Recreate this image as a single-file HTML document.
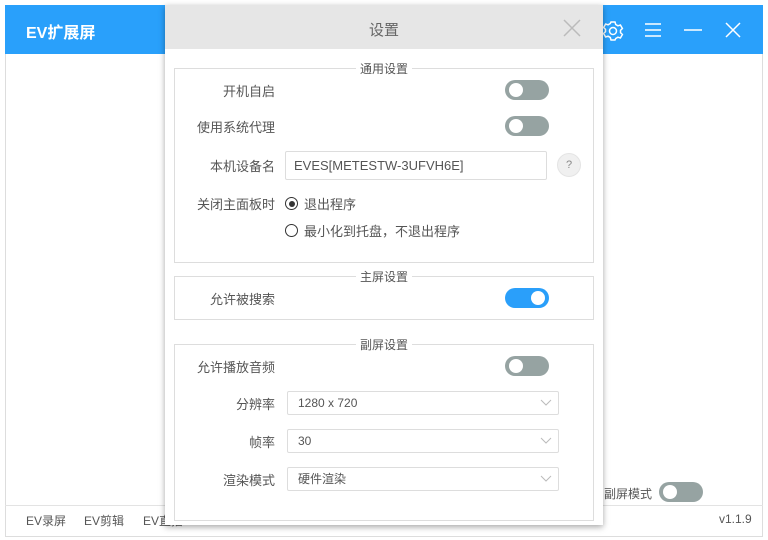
<!DOCTYPE html><html><head><meta charset="utf-8"><style>
*{margin:0;padding:0;box-sizing:border-box}
body{width:768px;height:540px;background:#fff;font-family:"Liberation Sans","Noto Sans CJK SC",sans-serif;font-size:13px;color:#555;position:relative;overflow:hidden}
.a{position:absolute}
.win{left:5px;top:5px;width:758px;height:532px;border:1px solid #ddd;background:#fff}
.hdr{left:5px;top:5px;width:758px;height:49px;background:#29a0fb}
.tg{position:absolute;width:44px;height:20px;border-radius:10px;background:#96a3a2}
.tg::after{content:"";position:absolute;left:4px;top:3px;width:14px;height:14px;border-radius:7px;background:#fff}
.tg.on{background:#2a9ffa}.tg.on::after{left:26px}
.box{position:absolute;left:174px;width:420px;border:1px solid #ddd}
.lg{position:absolute;left:0;width:100%;text-align:center;top:-9px;font-size:12px}
.lg span{background:#fff;padding:0 4px}
.lb{position:absolute;text-align:right;width:110px;left:165px}
.sel{position:absolute;left:287px;width:272px;height:24px;border:1px solid #ddd;border-radius:2px;padding-left:10px;line-height:22px;font-size:12px}
.sel svg{position:absolute;right:6px;top:6px}
.ft{position:absolute;top:512px;font-size:12px}
</style></head><body>
<div class="a win"></div>
<div class="a hdr"></div>
<div class="a" style="left:26px;top:19px;color:#fff;font-weight:bold;font-size:16px">EV扩展屏</div>
<svg class="a" style="left:600px;top:18px" width="26" height="26" viewBox="0 0 26 26" fill="none" stroke="#fff" stroke-width="1.5"><circle cx="13" cy="13" r="3.5"/><path d="M11 4h4l.7 2.5 2.2 1.3 2.5-.8 2 3.5-1.9 1.8v2.4l1.9 1.8-2 3.5-2.5-.8-2.2 1.3L15 22h-4l-.7-2.5-2.2-1.3-2.5.8-2-3.5 1.9-1.8v-2.4L3.6 9.5l2-3.5 2.5.8 2.2-1.3z"/></svg>
<svg class="a" style="left:644px;top:22px" width="20" height="16" stroke="#fff" stroke-width="1.5"><path d="M1 2h16M1 8h16M1 14h16"/></svg>
<svg class="a" style="left:683px;top:22px" width="20" height="16" stroke="#fff" stroke-width="1.5"><path d="M1 8h18"/></svg>
<svg class="a" style="left:725px;top:22px" width="16" height="16" stroke="#fff" stroke-width="1.5"><path d="M1 1l14 14M15 1L1 15"/></svg>
<div class="a" style="left:5px;top:505px;width:758px;border-top:1px solid #e3e3e3"></div>
<div class="ft" style="left:26px">EV录屏</div>
<div class="ft" style="left:84px">EV剪辑</div>
<div class="ft" style="left:143px">EV直播</div>
<div class="a" style="left:719px;top:512px;font-size:12px">v1.1.9</div>
<div class="a" style="left:604px;top:485px;font-size:12px">副屏模式</div>
<div class="tg" style="left:659px;top:482px"></div>
<div class="a" style="left:165px;top:5px;width:438px;height:520px;background:#fff;box-shadow:0 2px 6px rgba(0,0,0,.35)"></div>
<div class="a" style="left:165px;top:5px;width:438px;height:44px;background:#e6e6e6"></div>
<div class="a" style="left:165px;top:19px;width:438px;text-align:center;font-size:15px;color:#666">设置</div>
<svg class="a" style="left:563px;top:19px" width="18" height="18" stroke="#bbb" stroke-width="1.5"><path d="M1 1l16 16M17 1L1 17"/></svg>
<div class="box" style="top:68px;height:195px"><div class="lg"><span>通用设置</span></div></div>
<div class="box" style="top:276px;height:44px"><div class="lg"><span>主屏设置</span></div></div>
<div class="box" style="top:344px;height:177px"><div class="lg"><span>副屏设置</span></div></div>
<div class="lb" style="top:81px">开机自启</div><div class="tg" style="left:505px;top:80px"></div>
<div class="lb" style="top:117px">使用系统代理</div><div class="tg" style="left:505px;top:116px"></div>
<div class="lb" style="top:156px">本机设备名</div>
<div class="a" style="left:285px;top:151px;width:262px;height:29px;border:1px solid #ddd;border-radius:2px;padding-left:8px;line-height:27px;font-size:13px">EVES[METESTW-3UFVH6E]</div>
<div class="a" style="left:557px;top:153px;width:24px;height:24px;border-radius:12px;background:#f0f0f0;border:1px solid #e4e4e4;text-align:center;line-height:22px;font-size:11px;color:#888">?</div>
<div class="lb" style="top:194px">关闭主面板时</div>
<div class="a" style="left:285px;top:197px;width:13px;height:13px;border:1px solid #333;border-radius:7px"><div style="margin:2.5px;width:6px;height:6px;border-radius:3px;background:#333"></div></div>
<div class="a" style="left:304px;top:194px">退出程序</div>
<div class="a" style="left:285px;top:224px;width:13px;height:13px;border:1px solid #333;border-radius:7px"></div>
<div class="a" style="left:304px;top:221px">最小化到托盘，不退出程序</div>
<div class="lb" style="top:289px">允许被搜索</div><div class="tg on" style="left:505px;top:288px"></div>
<div class="lb" style="top:357px">允许播放音频</div><div class="tg" style="left:505px;top:356px"></div>
<div class="lb" style="top:394px">分辨率</div>
<div class="sel" style="top:391px">1280 x 720<svg width="12" height="10" stroke="#bbb" fill="none"><path d="M1 2l5 5 5-5"/></svg></div>
<div class="lb" style="top:432px">帧率</div>
<div class="sel" style="top:429px">30<svg width="12" height="10" stroke="#bbb" fill="none"><path d="M1 2l5 5 5-5"/></svg></div>
<div class="lb" style="top:470px">渲染模式</div>
<div class="sel" style="top:467px">硬件渲染<svg width="12" height="10" stroke="#bbb" fill="none"><path d="M1 2l5 5 5-5"/></svg></div>
</body></html>
